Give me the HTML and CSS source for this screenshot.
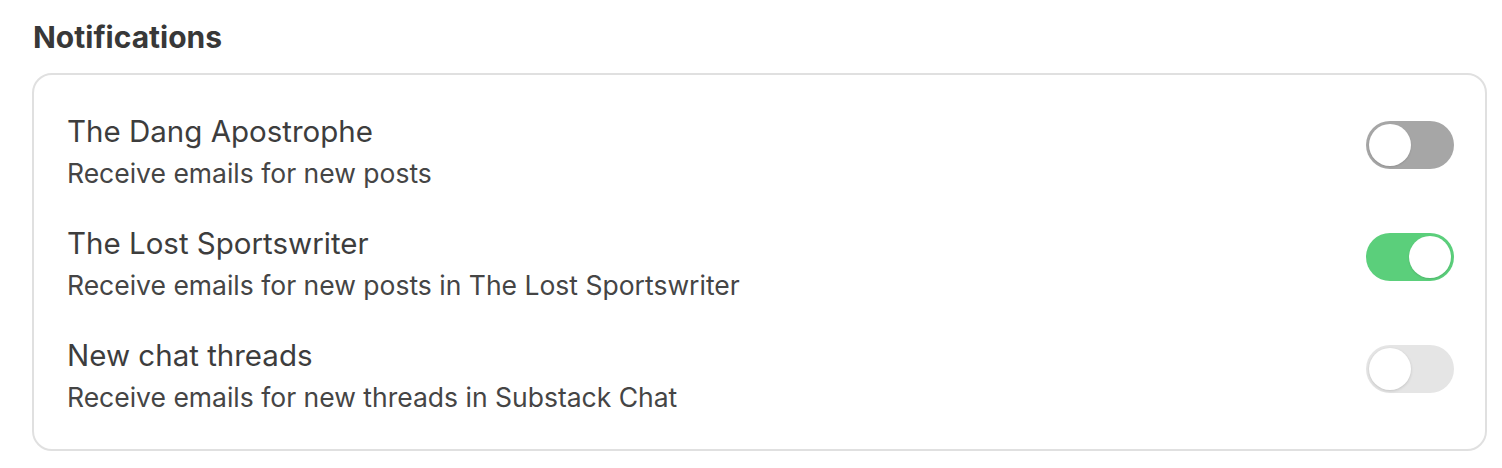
FILE: index.html
```html
<!DOCTYPE html>
<html lang="en">

<head>
    <meta charset="UTF-8">
    <meta name="viewport" content="width=device-width, initial-scale=1">
    <title>Notifications</title>
    <link rel="stylesheet" href="styles.css">
</head>

<body>
    <section class="settings">
        <h2 class="settings-title">Notifications</h2>

        <div class="card">
            <div class="row">
                <div class="row-text">
                    <div class="row-name">The Dang Apostrophe</div>
                    <div class="row-desc">Receive emails for new posts</div>
                </div>
                <label class="toggle">
                    <input type="checkbox">
                    <span class="track"></span>
                </label>
            </div>

            <div class="row">
                <div class="row-text">
                    <div class="row-name">The Lost Sportswriter</div>
                    <div class="row-desc">Receive emails for new posts in The Lost Sportswriter</div>
                </div>
                <label class="toggle">
                    <input type="checkbox" checked>
                    <span class="track"></span>
                </label>
            </div>

            <div class="row">
                <div class="row-text">
                    <div class="row-name">New chat threads</div>
                    <div class="row-desc">Receive emails for new threads in Substack Chat</div>
                </div>
                <label class="toggle">
                    <input type="checkbox" disabled>
                    <span class="track"></span>
                </label>
            </div>
        </div>
    </section>
</body>

</html>
```

FILE: styles.css
```css
body {
    margin: 0;
    font-family: Inter, "Liberation Sans", Arial, sans-serif;
    background: #fff;
    color: #404040;
}

.settings {
    padding: 18px 15px 0 32px;
}

.settings-title {
    margin: 0 0 17px 1px;
    font-size: 30px;
    line-height: 38px;
    font-weight: 700;
    color: #383838;
}

.card {
    border: 2px solid #e0e0e0;
    border-radius: 20px;
    padding: 38px 31px 34px 33px;
    display: flex;
    flex-direction: column;
    gap: 34px;
}

.row {
    display: flex;
    justify-content: space-between;
    align-items: flex-start;
}

.row-name {
    font-size: 29.5px;
    line-height: 36px;
    color: #3d3d3d;
}

.row-desc {
    margin-top: 6px;
    font-size: 26.5px;
    line-height: 36px;
    color: #454545;
}

.toggle {
    position: relative;
    display: block;
    width: 88px;
    height: 48px;
    margin-top: 8px;
    cursor: pointer;
}

.toggle input {
    position: absolute;
    opacity: 0;
    width: 0;
    height: 0;
}

.track {
    display: block;
    width: 100%;
    height: 100%;
    border-radius: 24px;
    background: #a6a6a6;
}

.track::after {
    content: "";
    position: absolute;
    top: 3px;
    left: 3px;
    width: 42px;
    height: 42px;
    border-radius: 50%;
    background: #fff;
    box-shadow: 0 1px 2px rgba(0, 0, 0, 0.12);
}

.toggle input:checked + .track {
    background: #5bcf7b;
}

.toggle input:checked + .track::after {
    left: 43px;
}

.toggle input:disabled + .track {
    background: #e5e5e5;
    cursor: default;
}

.toggle input:disabled + .track::after {
    box-shadow: 0 1px 3px rgba(0, 0, 0, 0.15);
}
```
